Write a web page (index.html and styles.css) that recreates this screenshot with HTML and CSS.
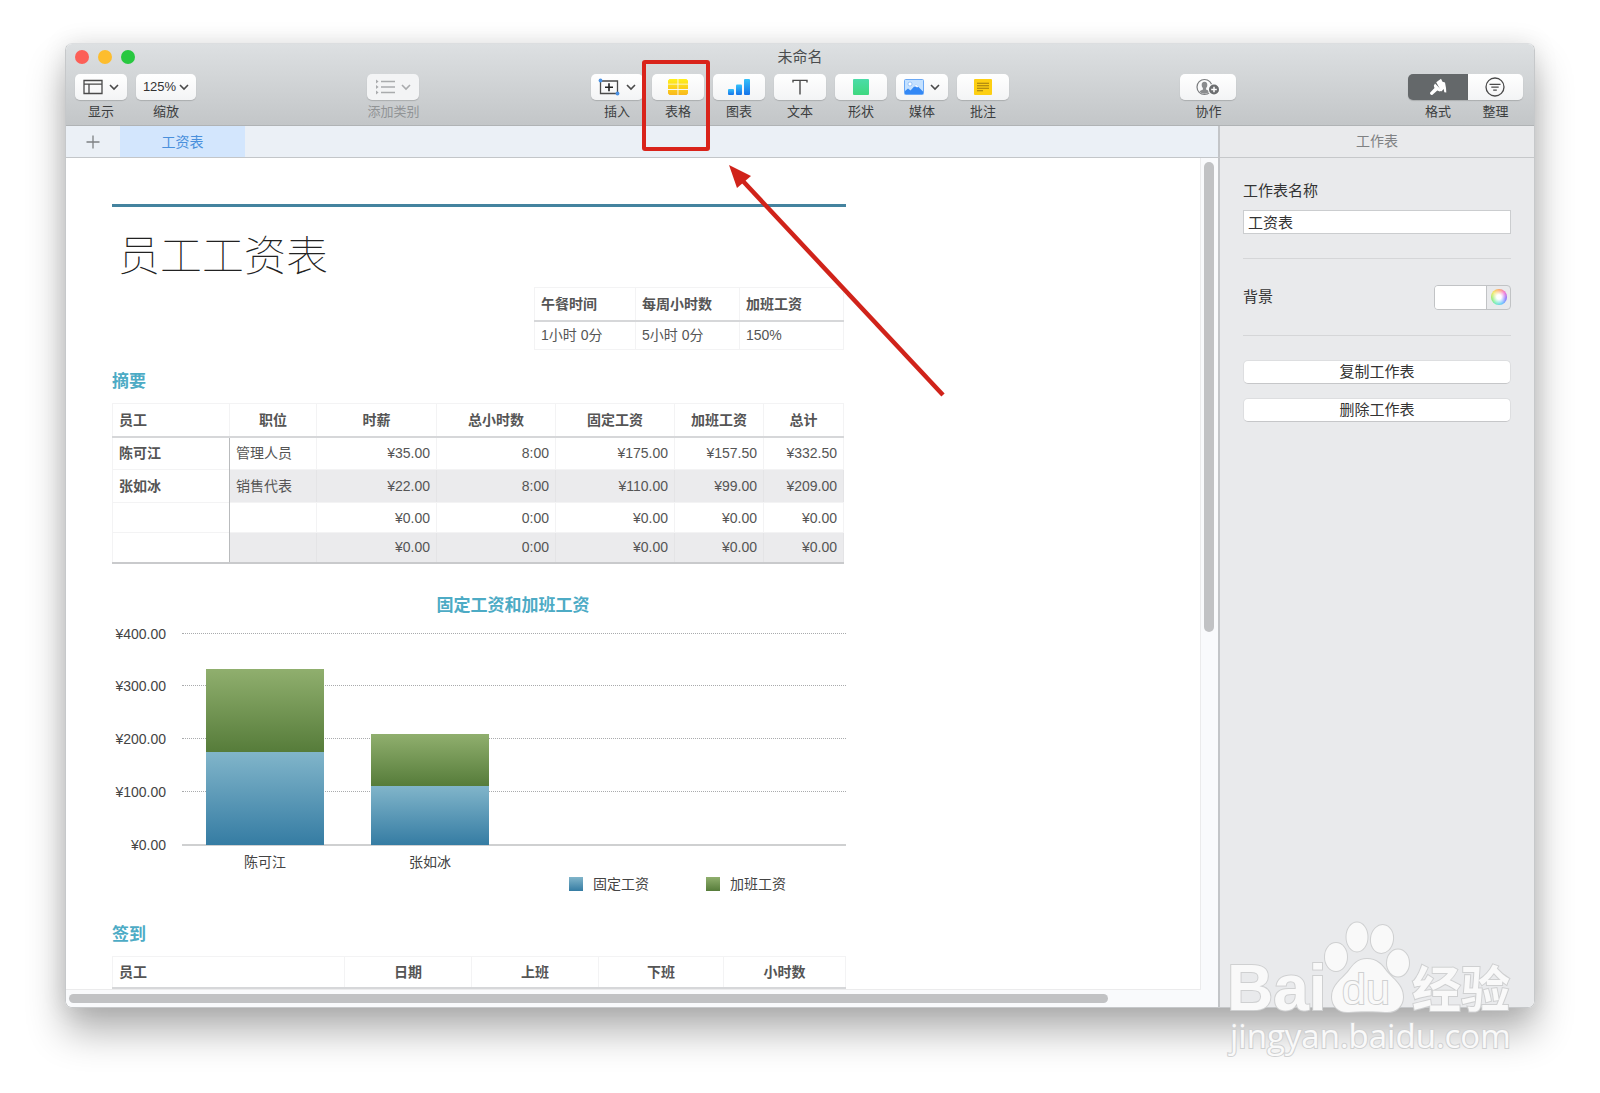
FILE: index.html
```
<!DOCTYPE html>
<html lang="zh-CN">
<head>
<meta charset="utf-8">
<meta name="viewport" content="width=device-width, initial-scale=1">
<title>未命名</title>
<link rel="stylesheet" href="styles.css">
</head>
<body>
<div class="window">
  <header class="titlebar">
    <div class="title-row">
      <div class="lights"><span class="light red"></span><span class="light yellow"></span><span class="light green"></span></div>
      <h1 class="doc-title">未命名</h1>
      <div></div>
    </div>
    <div class="toolbar">
      <div class="group">
        <div class="tool">
          <button class="btn" id="b-view" aria-labelledby="l-view">
            <svg width="20" height="16" viewBox="0 0 20 16" fill="none" stroke="#4a4a4a" stroke-width="1.3"><path d="M1 1.5h18v13H1zM1 5.2h18M6 5.2v9.3"/></svg>
            <svg class="chev" width="10" height="7" viewBox="0 0 10 7"><path d="M1 1l4 4 4-4"/></svg>
          </button>
          <label id="l-view" for="b-view">显示</label>
        </div>
        <div class="tool">
          <button class="btn zoom" id="b-zoom">125%<svg class="chev" width="10" height="7" viewBox="0 0 10 7"><path d="M1 1l4 4 4-4"/></svg></button>
          <label for="b-zoom">缩放</label>
        </div>
      </div>
      <div class="tool disabled">
        <button class="btn" id="b-cat" disabled>
          <svg width="20" height="16" viewBox="0 0 20 16" fill="none" stroke="#a9abad" stroke-width="1.3"><path d="M6 2.5h14M6 8h14M6 13.5h14"/><path d="M1 .5l2.6 2L1 4.500zM1 6l2.600 2L1 10zM1 11.500l2.600 2L1 15.500z" fill="#a9abad" stroke="none"/></svg>
          <svg class="chev" width="10" height="7" viewBox="0 0 10 7"><path d="M1 1l4 4 4-4"/></svg>
        </button>
        <label for="b-cat">添加类别</label>
      </div>
      <div class="group">
        <div class="tool">
          <button class="btn" id="b-insert">
            <svg width="22" height="18" viewBox="0 0 22 18" fill="none" stroke="#4a4a4a" stroke-width="1.300"><path d="M2.500 3h17v12.500h-17z"/><path d="M11 5.200v8M7 9.200h8" stroke="#222" stroke-width="1.600"/><circle cx="2.500" cy="2.500" r="1.900" fill="#4a90e2" stroke="none"/><circle cx="19.500" cy="15.500" r="1.900" fill="#4a90e2" stroke="none"/></svg>
            <svg class="chev" width="10" height="7" viewBox="0 0 10 7"><path d="M1 1l4 4 4-4"/></svg>
          </button>
          <label for="b-insert">插入</label>
        </div>
        <div class="tool">
          <button class="btn" id="b-table">
            <svg width="20" height="16" viewBox="0 0 20 16"><defs><linearGradient id="gy" x1="0" y1="0" x2="0" y2="16" gradientUnits="userSpaceOnUse"><stop stop-color="#fff01c"/><stop offset="1" stop-color="#f9b81c"/></linearGradient></defs><path fill="url(#gy)" d="M1.500 0h8v4.800H0V1.500zM10.400 0h8l1.600 1.500v3.300h-9.600zM0 5.600h9.500v4.500H0zM10.400 5.600H20v4.500h-9.600zM0 10.900h9.500V16h-8L0 14.500zM10.400 10.900H20v3.600L18.500 16h-8.100z"/></svg>
          </button>
          <label for="b-table">表格</label>
        </div>
        <div class="tool">
          <button class="btn" id="b-chart">
            <svg width="22" height="16" viewBox="0 0 22 16"><defs><linearGradient id="gb" x1="0" y1="0" x2="0" y2="1"><stop stop-color="#35c2fa"/><stop offset="1" stop-color="#1673ea"/></linearGradient></defs><g fill="url(#gb)"><rect y="10" width="6" height="6" rx="1"/><rect x="8" y="5.500" width="6" height="10.500" rx="1"/><rect x="16" width="6" height="16" rx="1"/></g></svg>
          </button>
          <label for="b-chart">图表</label>
        </div>
        <div class="tool">
          <button class="btn" id="b-text">
            <svg width="16" height="16" viewBox="0 0 16 16" fill="none" stroke="#4a4a4a" stroke-width="1.400"><path d="M1 3.500V1.400h14v2.100M8 1.400V15.500"/></svg>
          </button>
          <label for="b-text">文本</label>
        </div>
        <div class="tool">
          <button class="btn" id="b-shape">
            <svg width="16" height="16" viewBox="0 0 16 16"><defs><linearGradient id="gg" x1="0" y1="0" x2="0" y2="1"><stop stop-color="#4bdca8"/><stop offset="1" stop-color="#3fd87f"/></linearGradient></defs><rect width="16" height="16" rx="1" fill="url(#gg)"/></svg>
          </button>
          <label for="b-shape">形状</label>
        </div>
        <div class="tool">
          <button class="btn" id="b-media">
            <svg width="20" height="16" viewBox="0 0 20 16"><rect x=".5" y=".5" width="19" height="15" rx="1" fill="#c4e1ff" stroke="#6aa8f5"/><circle cx="6" cy="5" r="2" fill="#fff" stroke="#6aa8f5" stroke-width=".6"/><path d="M1 12l3-2.500 2.500 2L12 5.500l7 7V15H1z" fill="#3388f5"/><path d="M10 7.700l2-2.200 2.300 2.300-1.300.7-1-1z" fill="#fff"/></svg>
            <svg class="chev" width="10" height="7" viewBox="0 0 10 7"><path d="M1 1l4 4 4-4"/></svg>
          </button>
          <label for="b-media">媒体</label>
        </div>
        <div class="tool">
          <button class="btn" id="b-note">
            <svg width="18" height="16" viewBox="0 0 18 16"><rect width="18" height="16" rx="1" fill="#fdcf12"/><path d="M3 4.200h12M3 6.700h12M3 9.200h12M3 11.700h6" stroke="#9c7a10" stroke-width="1.100"/></svg>
          </button>
          <label for="b-note">批注</label>
        </div>
      </div>
      <div class="tool">
        <button class="btn wide" id="b-collab">
          <svg width="24" height="18" viewBox="0 0 24 18"><circle cx="8.500" cy="9" r="7.500" fill="none" stroke="#7b7d7f" stroke-width="1.200"/><path d="M8.500 3.800c-2 0-3 1.400-2.800 3.400.1 1.300.6 2.200 1.200 2.900v1.500c-1 .6-2.400.9-3.200 1.900 2.500 3 7 3 9.600 0-.8-1-2.200-1.300-3.200-1.900v-1.500c.6-.7 1.100-1.600 1.200-2.900.2-2-.8-3.400-2.800-3.400z" fill="#8a8c8e"/><circle cx="18" cy="11.500" r="6" fill="#fafbfb"/><circle cx="18" cy="11.500" r="5" fill="#6b6d6f"/><path d="M18 8.700v5.600M15.200 11.500h5.600" stroke="#fff" stroke-width="1.500"/></svg>
        </button>
        <label for="b-collab">协作</label>
      </div>
      <div class="group segmented">
        <div class="tool">
          <button class="btn seg active" id="b-format">
            <svg width="18" height="18" viewBox="0 0 18 18" fill="#fff"><path d="M7.200 4.200L12 .8l1.500 3 2.500.8L17 10l.3 4.500-2-.2-.6-3.300-2.300 2.600z"/><path d="M6 5.600l7 7-2.200.8-2.500-.8-4.800 4.200c-1.200.9-3.200-.9-2.300-2.200L5.500 10 4.800 7.700z"/></svg>
          </button>
          <label for="b-format">格式</label>
        </div>
        <div class="tool">
          <button class="btn seg last" id="b-sort">
            <svg width="20" height="20" viewBox="0 0 20 20" fill="none" stroke="#4a4a4a" stroke-width="1.300"><circle cx="10" cy="10" r="9"/><path d="M4.500 7.300h11M6.300 10.200h7.400M8.200 13.100h3.600"/></svg>
          </button>
          <label for="b-sort">整理</label>
        </div>
      </div>
    </div>
  </header>

  <div class="body">
    <main class="main">
      <nav class="tabs">
        <button class="add" aria-label="+"><svg width="14" height="14" viewBox="0 0 14 14" stroke="#7d8083" stroke-width="1.300"><path d="M7 .5v13M.5 7h13"/></svg></button>
        <button class="tab">工资表</button>
      </nav>
      <div class="scroller">
        <div class="canvas">
          <div class="sheet">
            <h2 class="sheet-title">员工工资表</h2>
            <table class="grid rates">
              <colgroup><col class="c101"><col class="c104"><col class="c104"></colgroup>
              <thead><tr><th>午餐时间</th><th>每周小时数</th><th>加班工资</th></tr></thead>
              <tbody><tr><td>1小时 0分</td><td>5小时 0分</td><td>150%</td></tr></tbody>
            </table>
            <h3 class="section">摘要</h3>
            <table class="grid summary">
              <colgroup><col class="c117"><col class="c87"><col class="c120"><col class="c119"><col class="c119"><col class="c89"><col class="c80"></colgroup>
              <thead><tr><th>员工</th><th>职位</th><th>时薪</th><th>总小时数</th><th>固定工资</th><th>加班工资</th><th>总计</th></tr></thead>
              <tbody>
                <tr><th>陈可江</th><td>管理人员</td><td>¥35.00</td><td>8:00</td><td>¥175.00</td><td>¥157.50</td><td>¥332.50</td></tr>
                <tr><th>张如冰</th><td>销售代表</td><td>¥22.00</td><td>8:00</td><td>¥110.00</td><td>¥99.00</td><td>¥209.00</td></tr>
                <tr class="short"><th></th><td></td><td>¥0.00</td><td>0:00</td><td>¥0.00</td><td>¥0.00</td><td>¥0.00</td></tr>
                <tr class="short"><th></th><td></td><td>¥0.00</td><td>0:00</td><td>¥0.00</td><td>¥0.00</td><td>¥0.00</td></tr>
              </tbody>
            </table>
            <figure class="chart">
              <figcaption>固定工资和加班工资</figcaption>
              <div class="axis"><span>¥400.00</span><span>¥300.00</span><span>¥200.00</span><span>¥100.00</span><span>¥0.00</span></div>
              <div class="lines"><i></i><i></i><i></i><i></i></div>
              <div class="bars">
                <div class="bar"><i class="green-fill" style="height:83px"></i><i class="blue-fill" style="height:93px"></i></div>
                <div class="bar"><i class="green-fill" style="height:52px"></i><i class="blue-fill" style="height:59px"></i></div>
              </div>
              <div class="cats"><span>陈可江</span><span>张如冰</span></div>
              <div class="legend"><span><i class="blue-fill"></i>固定工资</span><span><i class="green-fill"></i>加班工资</span></div>
            </figure>
            <h3 class="section">签到</h3>
            <table class="grid checkin">
              <colgroup><col class="c232"><col class="c127"><col class="c127"><col class="c125"><col></colgroup>
              <thead><tr><th>员工</th><th>日期</th><th>上班</th><th>下班</th><th>小时数</th></tr></thead>
            </table>
          </div>
        </div>
        <div class="vtrack"><div class="vthumb"></div></div>
        <div class="htrack"><div class="hthumb"></div></div>
      </div>
    </main>
    <aside class="inspector">
      <h2 class="inspector-title">工作表</h2>
      <div class="panel">
        <label class="field-label" for="sheet-name">工作表名称</label>
        <input class="field" id="sheet-name" type="text" value="工资表">
        <div class="bg-row">
          <label for="bg-color">背景</label>
          <button class="well" id="bg-color"><span class="swatch"></span><span class="wheel-cell"><span class="wheel"></span></span></button>
        </div>
        <button class="action">复制工作表</button>
        <button class="action">删除工作表</button>
      </div>
    </aside>
  </div>

  <svg class="annotation" width="310" height="345" viewBox="0 0 310 345" aria-hidden="true">
    <rect x="4" y="4" width="64" height="87" rx="1" fill="none" stroke="#d9231a" stroke-width="4"/>
    <path d="M303 337L101 121" stroke="#d0231a" stroke-width="4.500"/>
    <path d="M89 107l8 23 14-12z" fill="#d0231a"/>
  </svg>

  <svg class="watermark" width="300" height="140" viewBox="0 0 300 140">
    <g fill="#f9f9f9" stroke="#cfd0d1" stroke-width="2" paint-order="stroke">
      <text class="wm-latin" x="3" y="96">Bai</text>
      <ellipse cx="112" cy="43" rx="11" ry="14"/><ellipse cx="133" cy="23" rx="10.500" ry="14.500"/><ellipse cx="158" cy="25" rx="11" ry="14" transform="rotate(8 158 25)"/><ellipse cx="174" cy="49" rx="11" ry="13.500"/>
      <path d="M143 45c10 0 15 6 20 13 6 7 16 13 16 25 0 10-8 16-18 15-8-1-28-1-36 0-10 1-17-6-17-15 0-12 10-18 16-25 5-7 9-13 19-13z"/>
      <text class="wm-cjk" x="188" y="93">经验</text>
      <text class="wm-url" x="6" y="134">jingyan.baidu.com</text>
      <text class="wm-du" x="118" y="90">du</text>
    </g>
  </svg>
</div>
</body>
</html>
```
FILE: styles.css
```
* { box-sizing: border-box; }
body {
  margin: 0;
  padding: 43px 65px 86px;
  min-height: 100vh;
  display: flex;
  flex-direction: column;
  background: #fff;
  color: #333;
  font: 14px/20px "Liberation Sans", "Noto Sans CJK SC", sans-serif;
}
h1, h2, h3, figure { margin: 0; }
button { margin: 0; border: 0; padding: 0; font: inherit; color: inherit; background: none; }
svg { display: block; flex: none; }

.window {
  position: relative;
  flex: 1;
  display: flex;
  flex-direction: column;
  border-radius: 7px;
  border: 1px solid #c6c8ca;
  border-top-color: #dcdee0;
  box-shadow: 0 24px 38px rgba(0, 0, 0, 0.3), 0 0 24px rgba(0, 0, 0, 0.1);
}

/* Title bar and toolbar */
.titlebar {
  border-bottom: 1px solid #b0b3b5;
  border-radius: 6px 6px 0 0;
  background: linear-gradient(#dde0e2, #c3c6c8);
}
.title-row { display: grid; grid-template-columns: 1fr auto 1fr; height: 30px; padding: 3px 9px 0; }
.lights { display: flex; gap: 9px; padding-top: 3px; }
.light { width: 14px; height: 14px; border-radius: 50%; }
.red { background: #fc5f57; }
.yellow { background: #fdbd2e; }
.green { background: #28c840; }
.doc-title { font-size: 15px; font-weight: 400; color: #4a4c4e; }
.toolbar { display: flex; justify-content: space-between; padding: 0 11px 3px 9px; }
.group { display: flex; gap: 9px; }
.tool { display: flex; flex-direction: column; align-items: center; gap: 2px; }
.tool label { font-size: 13px; height: 20px; color: #3c3e40; }
.btn {
  display: flex;
  align-items: center;
  justify-content: center;
  gap: 6px;
  width: 52px;
  height: 26px;
  border-radius: 5px;
  background: linear-gradient(#fff, #f3f4f5);
  box-shadow: 0 1px 1px rgba(0, 0, 0, 0.16);
}
.btn.zoom { width: 60px; gap: 3px; color: #333; font-size: 13px; }
.btn.wide { width: 56px; }
.chev { fill: none; stroke: #4a4a4a; stroke-width: 1.6; }
.disabled label { color: #919496; }
.disabled .btn { background: #f3f4f5; }
.disabled .chev { stroke: #a9abad; }
.segmented { gap: 0; }
.btn.seg { width: 60px; border-radius: 5px 0 0 5px; }
.btn.seg.last { width: 55px; border-radius: 0 5px 5px 0; }
.btn.active { background: #64686a; }

/* Main split */
.body { flex: 1; display: flex; }
.main { flex: 1; min-width: 0; display: flex; flex-direction: column; }
.tabs { display: flex; height: 32px; border-bottom: 1px solid #c3c6c9; background: #ebf0f6; }
.add { width: 54px; display: flex; align-items: center; justify-content: center; }
.tab { width: 125px; background: #d3e6fd; color: #4a90dc; }
.scroller {
  flex: 1;
  display: grid;
  grid-template-columns: 1fr 17px;
  grid-template-rows: 1fr 17px;
  background: #f9fafc;
  border-radius: 0 0 0 7px;
}
.canvas { background: #fff; border: solid #ebebec; border-width: 0 1px 1px 0; padding: 46px 16px 0; padding-left: 46px; }
.vtrack { padding: 4px 3px; }
.vthumb { width: 10px; height: 57%; border-radius: 5px; background: #c1c2c4; }
.htrack { padding: 4px 3px; grid-column: 1; }
.hthumb { width: 92%; height: 9px; border-radius: 5px; background: #c1c2c4; }

/* Sheet */
.sheet { width: 100%; max-width: 734px; border-top: 3px solid #44839f; }
.sheet-title { margin-top: 14px; padding-left: 6px; font: 100 42px/64px "Noto Sans CJK SC", sans-serif; color: #222; }
.section { font-size: 17px; line-height: 24px; color: #4dabc5; }
.grid { border-collapse: collapse; table-layout: fixed; color: #555; }
.grid th, .grid td { padding: 0 6px; height: 33px; border: 1px solid #f3f3f4; text-align: left; font-weight: 400; }
.grid thead th { font-weight: 700; border-bottom: 2px solid #d6d7d9; }
.rates { width: 309px; margin: 2px 2px 20px auto; }
.rates td { height: 29px; }
.c80 { width: 80px; } .c87 { width: 87px; } .c89 { width: 89px; }
.c101 { width: 101px; } .c104 { width: 104px; } .c117 { width: 117px; }
.c119 { width: 119px; } .c120 { width: 120px; } .c125 { width: 125px; }
.c127 { width: 127px; } .c232 { width: 232px; }
.summary { width: 731px; margin-top: 9px; }
.summary th + th, .checkin th + th { text-align: center; }
.summary tbody th { font-weight: 700; border-right: 1px solid #b9bbbd; border-bottom: 1px dotted #e2e2e4; }
.summary td + td { text-align: right; }
.summary .short th, .summary .short td { height: 30px; }
.summary tbody tr:nth-child(even) td { background: #ebebed; border-right-color: #e4e4e6; }
.summary tbody tr:last-child th, .summary tbody tr:last-child td { border-bottom: 2px solid #c9cacc; }

/* Chart */
.chart {
  display: grid;
  grid-template-columns: 54px 1fr;
  grid-template-rows: 24px 15px 213px auto auto;
  column-gap: 16px;
  margin: 30px 0 29px;
  color: #444;
}
.chart figcaption { grid-column: 1 / 3; text-align: center; font-size: 17px; line-height: 24px; font-weight: 700; color: #4dabc5; padding-left: 68px; }
.axis { grid-area: 3 / 1; display: flex; flex-direction: column; justify-content: space-between; margin: -9px 0; text-align: right; }
.lines { grid-area: 3 / 2; display: grid; grid-template-rows: repeat(4, 1fr); border-bottom: 2px solid #cfd0d1; }
.lines i { border-top: 1px dotted #a9abad; }
.bars { grid-area: 3 / 2; display: flex; align-items: flex-end; gap: 47px; padding: 0 0 1px 24px; }
.bar { width: 118px; display: flex; flex-direction: column; }
.green-fill { background: linear-gradient(#90af6e, #567c3a); }
.blue-fill { background: linear-gradient(#81b5ca, #357ca3); }
.cats { grid-area: 4 / 2; display: flex; gap: 47px; padding: 6px 0 0 24px; text-align: center; }
.cats span { width: 118px; }
.legend { grid-area: 5 / 2; display: flex; gap: 57px; padding: 2px 0 0; justify-content: flex-end; margin-right: 60px; }
.legend span { display: flex; align-items: center; gap: 10px; }
.legend i { width: 14px; height: 14px; }
.checkin { width: 734px; margin-top: 9px; }
.checkin thead th { height: 32px; }

/* Inspector */
.inspector { width: 316px; border-left: 2px solid #c3c5c8; background: #e9eaec; border-radius: 0 0 6px 0; }
.inspector-title { height: 32px; line-height: 30px; border-bottom: 1px solid #c6c8ca; text-align: center; font-size: 14px; font-weight: 400; color: #7f8183; }
.panel { display: flex; flex-direction: column; padding: 23px 23px 0; font-size: 15px; }
.field { width: 100%; height: 24px; margin-top: 9px; padding: 0 4px 1px; border: 1px solid #cbcdcf; border-radius: 0; background: #fff; font: inherit; color: #333; }
.bg-row { display: flex; align-items: center; justify-content: space-between; height: 78px; margin: 24px 0; border: solid #d5d6d8; border-width: 1px 0; }
.well { display: flex; width: 77px; height: 25px; border: 1px solid #c1c3c5; border-radius: 4px; overflow: hidden; }
.swatch { flex: 1; background: #fff; }
.wheel-cell { width: 24px; display: flex; align-items: center; justify-content: center; border-left: 1px solid #c1c3c5; }
.wheel { width: 16px; height: 16px; border-radius: 50%; background: radial-gradient(#fff 20%, transparent 80%), conic-gradient(#ff8f3a, #f24ac8, #6a4cff, #3fb4ff, #49e8b0, #7ce84b, #f0e43c, #ff8f3a); }
.action { height: 24px; margin-bottom: 14px; border-radius: 5px; border: 1px solid #dddee0; border-bottom-color: #c6c7c9; background: #fff; line-height: 20px; }

/* Overlays */
.annotation { position: absolute; top: 14px; left: calc(50% - 160px); pointer-events: none; }
.watermark { position: absolute; right: 10px; bottom: -47px; overflow: visible; }
.wm-latin { font: 700 64px "Liberation Sans", sans-serif; }
.wm-cjk { font: 700 49px "Noto Sans CJK SC", sans-serif; }
.wm-url { font: 400 33px "Open Sans", sans-serif; }
.wm-du { font: 400 43px "Liberation Sans", sans-serif; }
```
